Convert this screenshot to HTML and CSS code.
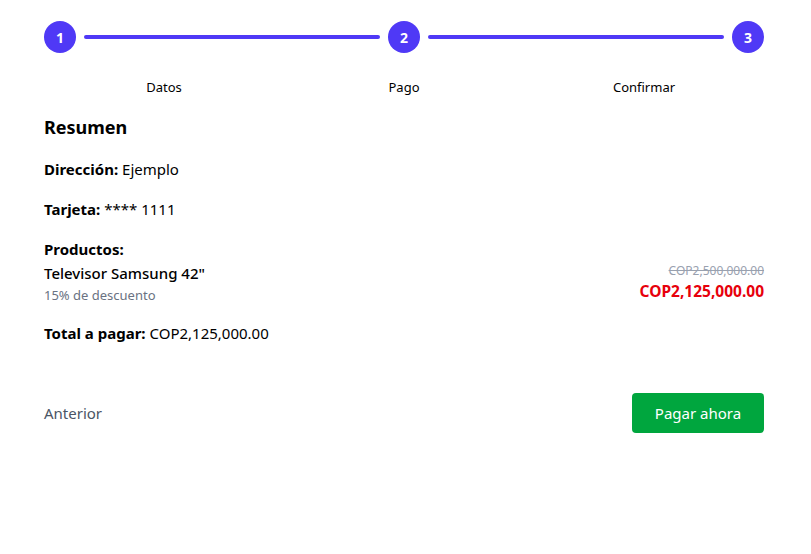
FILE: index.html
```html
<!DOCTYPE html>
<html lang="es">
<head>
<meta charset="utf-8">
<link rel="stylesheet" href="styles.css">
</head>
<body>
<div class="wrap">
  <div class="stepper">
    <div class="circle">1</div>
    <div class="line"></div>
    <div class="circle">2</div>
    <div class="line"></div>
    <div class="circle">3</div>
  </div>
  <div class="labels">
    <span>Datos</span>
    <span>Pago</span>
    <span>Confirmar</span>
  </div>
  <h2 class="title">Resumen</h2>
  <p class="row"><b>Dirección:</b> Ejemplo</p>
  <p class="row"><b>Tarjeta:</b> **** 1111</p>
  <div class="products">
    <b>Productos:</b>
    <div class="product">
      <div>
        <div class="pname">Televisor Samsung 42"</div>
        <div class="pdisc">15% de descuento</div>
      </div>
      <div class="prices">
        <div class="old">COP2,500,000.00</div>
        <div class="new">COP2,125,000.00</div>
      </div>
    </div>
  </div>
  <p class="row"><b>Total a pagar:</b> COP2,125,000.00</p>
  <div class="actions">
    <button class="prev">Anterior</button>
    <button class="pay">Pagar ahora</button>
  </div>
</div>
</body>
</html>
```
FILE: styles.css
```css
* { box-sizing: border-box; }
body {
  margin: 0;
  font-family: "Noto Sans", "Open Sans", sans-serif;
  color: #000;
  background: #fff;
}
.wrap {
  width: 764px;
  padding: 21px 0 0 44px;
}
.stepper {
  display: flex;
  align-items: center;
  gap: 8px;
}
.circle {
  width: 32px;
  height: 32px;
  border-radius: 50%;
  background: #4f39f6;
  color: #fff;
  font-weight: 700;
  font-size: 14px;
  display: flex;
  align-items: center;
  justify-content: center;
  flex: none;
}
.line {
  flex: 1;
  height: 4px;
  border-radius: 2px;
  background: #4f39f6;
}
.labels {
  display: grid;
  grid-template-columns: repeat(3, 1fr);
  text-align: center;
  font-size: 13px;
  margin-top: 25px;
  line-height: 18px;
}
.title {
  font-size: 18px;
  font-weight: 700;
  margin: 17px 0 0;
  line-height: 28px;
}
.row {
  font-size: 15px;
  margin: 16px 0 0;
  line-height: 24px;
}
.products {
  font-size: 15px;
  margin-top: 16px;
  line-height: 24px;
}
.product {
  display: flex;
  justify-content: space-between;
  align-items: flex-start;
}
.pname { font-weight: 500; line-height: 24px; }
.pdisc { font-size: 13px; color: #6a7282; line-height: 20px; }
.prices { text-align: right; padding-top: 2px; }
.old {
  font-size: 12px;
  color: #99a1af;
  text-decoration: line-through;
  line-height: 16px;
}
.new {
  color: #e7000b;
  font-weight: 700;
  font-size: 15.5px;
  line-height: 24px;
}
.actions {
  display: flex;
  justify-content: space-between;
  align-items: center;
  margin-top: 48px;
}
button { font-family: inherit; border: 0; cursor: pointer; }
.prev {
  background: none;
  padding: 0;
  color: #4a5565;
  font-size: 15px;
}
.pay {
  background: #00a63e;
  color: #fff;
  font-size: 15px;
  width: 132px;
  height: 40px;
  border-radius: 4px;
}
```
